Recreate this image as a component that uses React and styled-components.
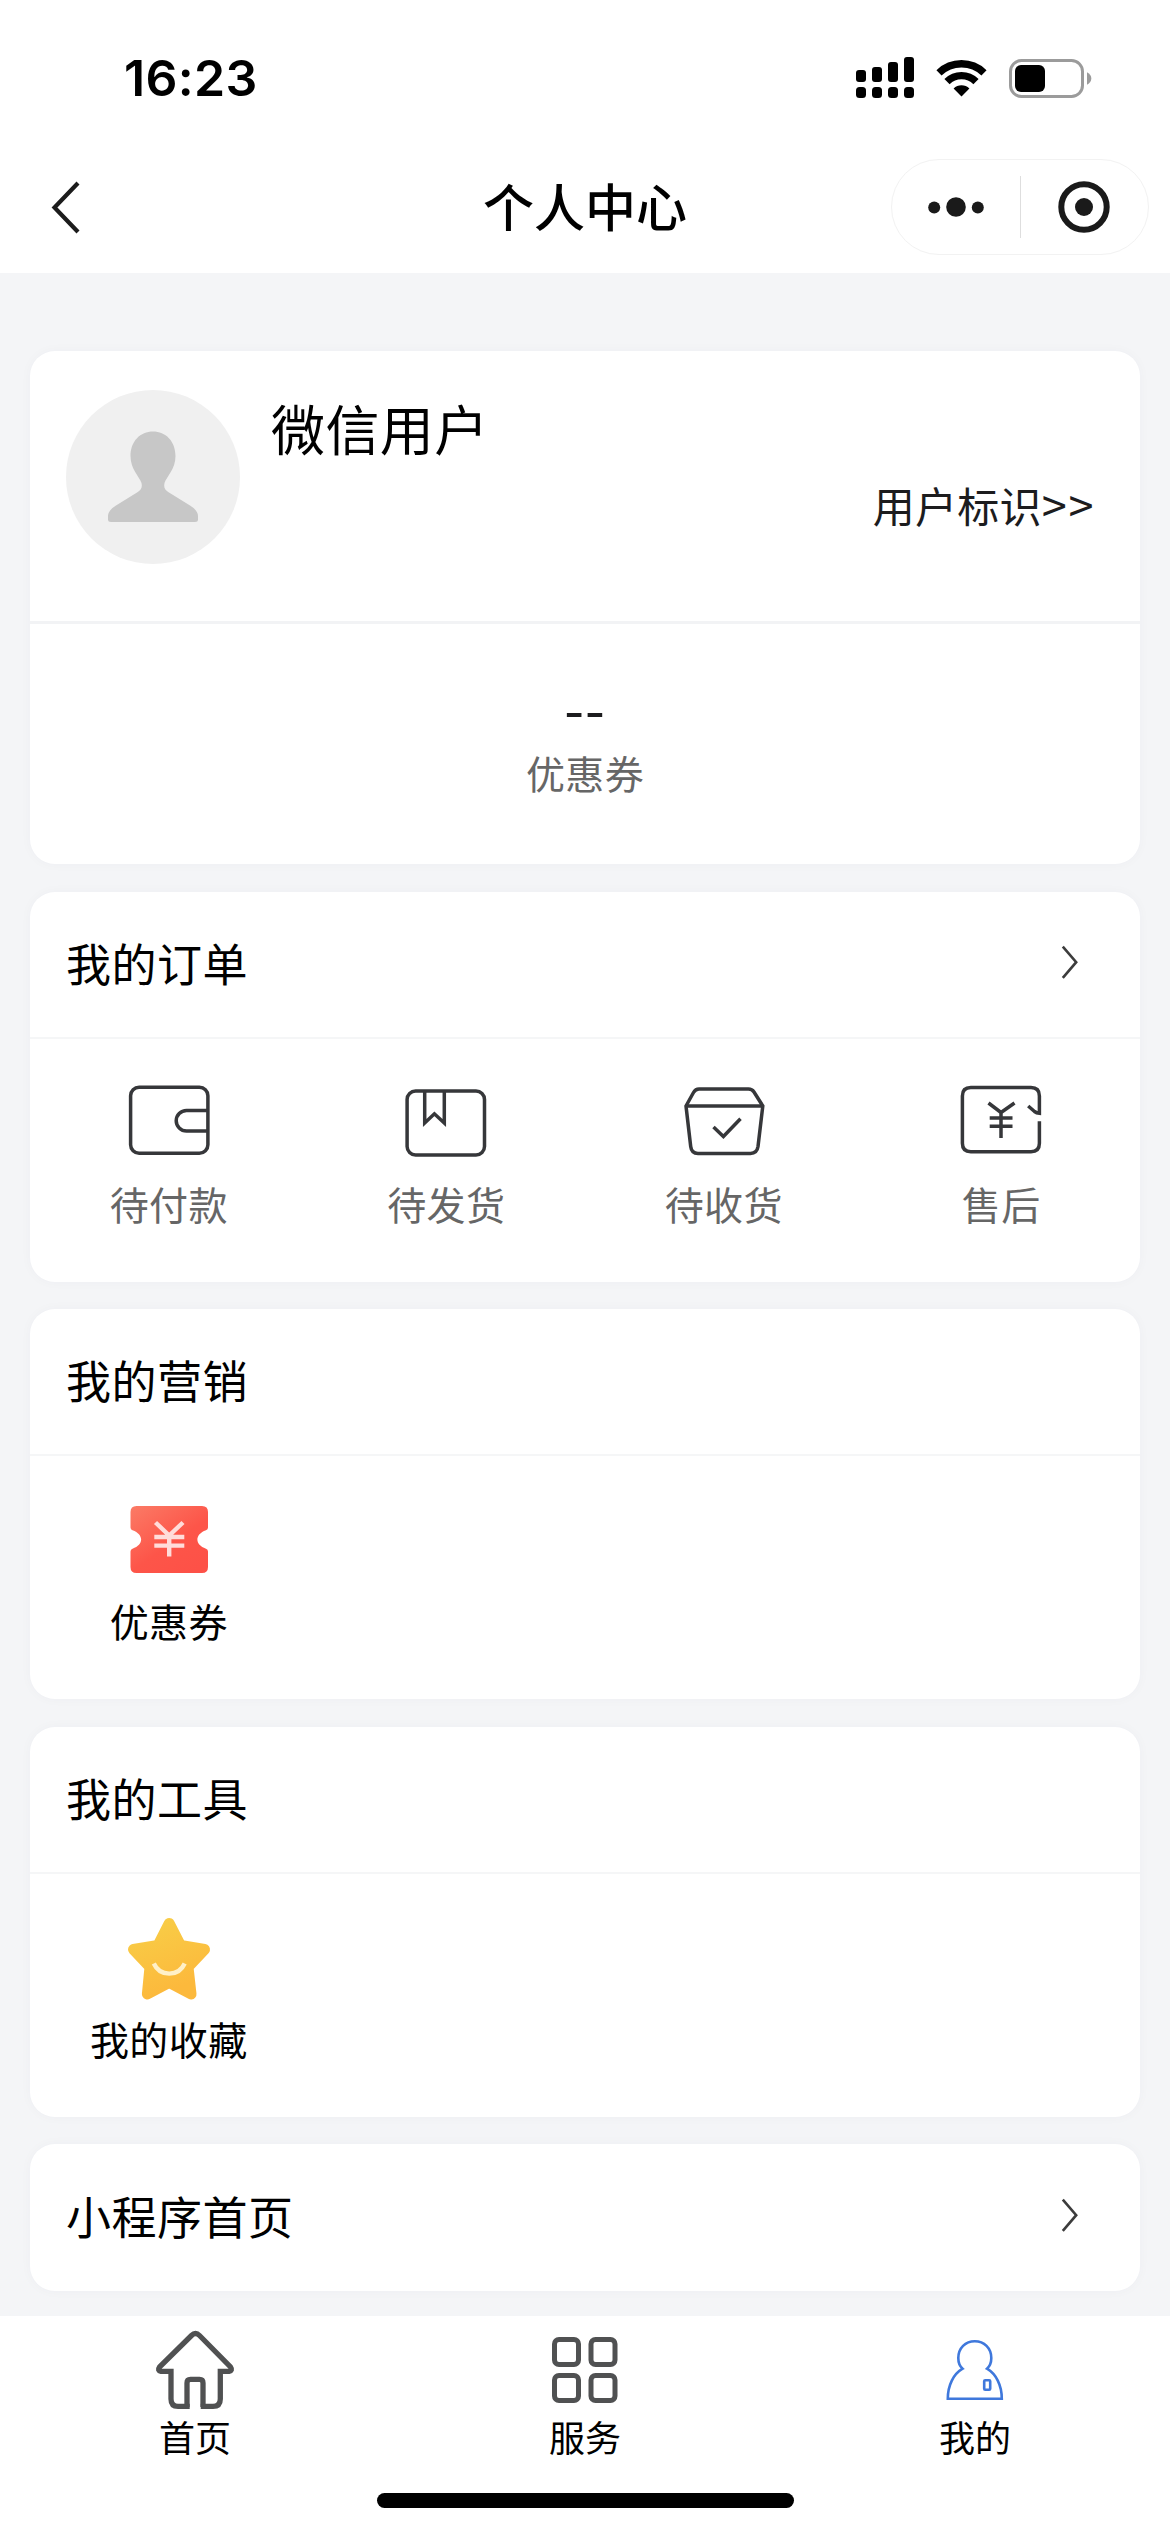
import React, { useState } from 'react';
import styled, { createGlobalStyle } from 'styled-components';

const COLORS = {
    BACKGROUND: '#f4f5f7',
    PANEL: '#ffffff',
    TEXT: '#000000',
    TEXT_DARK: '#1c1c1e',
    TEXT_GREY: '#666666',
    LINE: '#f5f6f7',
    ICON: '#36373a',
    TAB_ICON: '#505152',
    TAB_ACTIVE: '#3f78dc',
};

const GlobalStyle = createGlobalStyle`
    * {
        box-sizing: border-box;
    }

    body {
        margin: 0;
        background-color: ${COLORS.BACKGROUND};
        font-family: 'Noto Sans CJK SC', sans-serif;
        color: ${COLORS.TEXT};
    }
`;

const Page = styled.div`
    width: 1170px;
    height: 2532px;
    display: flex;
    flex-direction: column;
    overflow: hidden;
    background-color: ${COLORS.BACKGROUND};
`;

const StatusBar = styled.div`
    height: 141px;
    padding: 47px 78px 0 124px;
    display: flex;
    justify-content: space-between;
    align-items: flex-start;
    background-color: ${COLORS.PANEL};
`;

const Clock = styled.div`
    font-family: Inter, sans-serif;
    font-size: 50px;
    font-weight: 600;
    line-height: 62px;
    letter-spacing: 0.3px;
`;

const StatusIcons = styled.div`
    display: flex;
    align-items: center;
    gap: 22px;
    height: 62px;
`;

const NavBar = styled.div`
    height: 132px;
    padding: 0 21px 0 45px;
    display: grid;
    grid-template-columns: 1fr auto 1fr;
    align-items: center;
    background-color: ${COLORS.PANEL};
`;

const BackButton = styled.div`
    display: flex;
    cursor: pointer;
`;

const NavTitle = styled.div`
    font-size: 51px;
    font-weight: 500;
    line-height: 72px;
    margin: 0 0 5px -24px;
`;

const Capsule = styled.div`
    justify-self: end;
    width: 258px;
    height: 96px;
    border: 1.5px solid #f2f2f2;
    border-radius: 48px;
    display: flex;
    align-items: center;
`;

const CapsuleButton = styled.div`
    flex: 1;
    display: flex;
    justify-content: center;
    cursor: pointer;
`;

const CapsuleLine = styled.div`
    width: 1px;
    height: 62px;
    background-color: #dedede;
`;

const Content = styled.div`
    flex: 1;
    min-height: 0;
    padding: 78px 30px 0;
    display: flex;
    flex-direction: column;
    gap: 27.6px;
    overflow: hidden;
`;

const Card = styled.div`
    flex: none;
    background-color: ${COLORS.PANEL};
    border-radius: 25px;
    box-shadow: 0 0 12px rgba(60, 70, 90, 0.03);
`;

const Profile = styled.div`
    height: 273px;
    padding: 39px 45px 0 36px;
    display: flex;
    border-bottom: 3px solid #f2f3f5;
`;

const ProfileText = styled.div`
    flex: 1;
    margin-left: 31px;
    display: flex;
    flex-direction: column;
`;

const UserName = styled.div`
    margin-top: -2px;
    font-size: 54px;
    line-height: 80px;
    letter-spacing: 0.4px;
`;

const UserMark = styled.div`
    align-self: flex-end;
    margin-top: 6px;
    font-size: 42px;
    line-height: 62px;
    letter-spacing: 0.3px;
    color: ${COLORS.TEXT_DARK};
    cursor: pointer;
`;

const Arrows = styled.span`
    font-size: 45px;
    line-height: 1;
    letter-spacing: 1.6px;
`;

const Coupons = styled.div`
    height: 240px;
    padding-top: 51px;
    display: flex;
    flex-direction: column;
    align-items: center;
`;

const CouponCount = styled.div`
    height: 62px;
    font-size: 57px;
    line-height: 62px;
    letter-spacing: 1px;
    color: ${COLORS.TEXT_DARK};
`;

const CouponLabel = styled.div`
    margin-top: 7px;
    font-size: 39px;
    line-height: 56px;
    letter-spacing: 0.4px;
    color: ${COLORS.TEXT_GREY};
`;

const CardHead = styled.div`
    height: 147px;
    padding: 0 61px 3px 36px;
    display: flex;
    justify-content: space-between;
    align-items: center;
    border-bottom: ${(props) => (props.$line ? `2px solid ${COLORS.LINE}` : 'none')};
`;

const CardTitle = styled.div`
    font-size: 45px;
    line-height: 66px;
    letter-spacing: 0.5px;
`;

const EntryGrid = styled.div`
    height: 243px;
    padding-top: 32px;
    display: grid;
    grid-template-columns: repeat(4, 1fr);
    align-items: start;
`;

const Entry = styled.div`
    display: flex;
    flex-direction: column;
    align-items: center;
    gap: 4px;
    cursor: pointer;
`;

const EntryLabel = styled.div`
    font-size: 39px;
    line-height: 56px;
    letter-spacing: 0.4px;
    color: ${(props) => (props.$grey ? COLORS.TEXT_GREY : COLORS.TEXT)};
`;

const TabBar = styled.div`
    height: 216px;
    background-color: ${COLORS.PANEL};
    display: flex;
    flex-direction: column;
    align-items: center;
`;

const Tabs = styled.div`
    width: 100%;
    height: 177px;
    padding-top: 14px;
    display: flex;
`;

const Tab = styled.div`
    flex: 1;
    display: flex;
    flex-direction: column;
    align-items: center;
    color: ${(props) => (props.$active ? COLORS.TAB_ACTIVE : COLORS.TAB_ICON)};
    cursor: pointer;
`;

const TabLabel = styled.div`
    font-size: 36px;
    line-height: 52px;
    color: ${COLORS.TEXT};
`;

const HomeIndicator = styled.div`
    width: 417px;
    height: 15px;
    border-radius: 8px;
    background-color: #000000;
`;

const SignalIcon = () => (
    <svg width="58" height="42" viewBox="0 0 58 42">
        <rect x="0" y="13" width="10" height="12" rx="3" />
        <rect x="16" y="10" width="10" height="15" rx="3" />
        <rect x="32" y="5" width="10" height="20" rx="3" />
        <rect x="48" y="0" width="10" height="25" rx="3" />
        {[0, 16, 32, 48].map((x) => (
            <rect key={x} x={x} y="30" width="10" height="11" rx="3.5" />
        ))}
    </svg>
);

const WifiIcon = () => (
    <svg width="51" height="38" viewBox="0 0 51 38">
        <g fill="none" stroke="#000000" strokeWidth="7.4">
            <path d="M3 13.8A32.5 32.5 0 0 1 48 13.8" />
            <path d="M11 22.6A20.6 20.6 0 0 1 40 22.6" />
        </g>
        <path d="M25.5 37.5L17.6 29.4A11.5 11.5 0 0 1 33.4 29.4Z" />
    </svg>
);

const BatteryIcon = () => (
    <svg width="83" height="39" viewBox="0 0 83 39">
        <rect x="1.5" y="1.5" width="72" height="36" rx="11" fill="none" stroke="#9b9b9b" strokeWidth="3" />
        <rect x="6" y="6" width="30" height="27" rx="6" />
        <path d="M78 13.3Q82.3 15.5 82.3 19.5T78 25.7Z" fill="#9b9b9b" />
    </svg>
);

const BackIcon = () => (
    <svg width="42" height="56" viewBox="0 0 42 56" fill="none" stroke="#1c1c1c" strokeWidth="4.2">
        <path d="M33 4L9.5 28.5L33 53" />
    </svg>
);

const DotsIcon = () => (
    <svg width="56" height="20" viewBox="0 0 56 20" fill="#1a1a1a">
        <circle cx="6.2" cy="10.5" r="6" />
        <circle cx="28" cy="10" r="9.8" />
        <circle cx="49.8" cy="10.5" r="6" />
    </svg>
);

const TargetIcon = () => (
    <svg width="52" height="52" viewBox="0 0 52 52">
        <circle cx="26" cy="26" r="22.7" fill="none" stroke="#1a1a1a" strokeWidth="6" />
        <circle cx="26" cy="26" r="9" fill="#1a1a1a" />
    </svg>
);

const ArrowIcon = () => (
    <svg width="20" height="36" viewBox="0 0 20 36" fill="none" stroke="#3c3c3c" strokeWidth="2.6">
        <path d="M3.8 1.6L17.2 17.2L3.8 32.8" />
    </svg>
);

const AvatarIcon = () => (
    <svg width="174" height="174" viewBox="0 0 174 174">
        <circle cx="87" cy="87" r="87" fill="#f0f0f0" />
        <path
            d="M87 41.5C99.5 41.5 109.5 51 109.5 66C109.5 79 101 86 98.5 93C97.5 98 99 100 103 102.5L124 115.5Q132 120.5 132 126V129.5Q132 132 129 132H45Q42 132 42 129.5V126Q42 120.5 50 115.5L71 102.5C75 100 76.5 98 75.5 93C73 86 64.5 79 64.5 66C64.5 51 74.5 41.5 87 41.5Z"
            fill="#c7c7c7"
        />
    </svg>
);

const LineIcon = ({ children }) => (
    <svg
        width="100"
        height="100"
        viewBox="0 0 100 100"
        fill="none"
        stroke={COLORS.ICON}
        strokeWidth="3.5"
    >
        {children}
    </svg>
);

const WalletIcon = () => (
    <LineIcon>
        <rect x="11.6" y="16.3" width="77.3" height="66" rx="8.5" />
        <path d="M88.9 39.4H67.5A10.3 10.3 0 0 0 67.5 60H88.9" />
    </LineIcon>
);

const ParcelIcon = () => (
    <LineIcon>
        <rect x="11.1" y="20" width="77.4" height="64" rx="8.5" />
        <path d="M28.7 20V52L38.4 42.8L48.3 52V20" />
    </LineIcon>
);

const BasketIcon = () => (
    <LineIcon>
        <path d="M12 35L19.5 21.5Q21.5 18 25 18H74.5Q78 18 80 21L88.8 35L84 75.5Q83 82.4 76.5 82.4H24Q17.5 82.4 16.7 75.5Z" />
        <path d="M12 35H89" />
        <path d="M39.5 56L49.4 65.5L66.5 47.7" />
    </LineIcon>
);

const RefundIcon = () => (
    <LineIcon>
        <path d="M77.2 35L83.5 40.5Q85.5 42 88.4 42.3V25Q88.4 16.6 80 16.6H19.8Q11.4 16.6 11.4 25V72.3Q11.4 80.7 19.8 80.7H80Q88.4 80.7 88.4 72.3V50.3" />
        <path d="M37.5 32L50 41.5L63.5 32M50 41.5V67M38.7 47H61.5M38.7 55.3H61.5" />
    </LineIcon>
);

const CouponIcon = () => (
    <svg width="100" height="100" viewBox="0 0 100 100">
        <defs>
            <linearGradient id="coupon" x1="0" y1="0" x2="0.8" y2="1">
                <stop offset="0" stopColor="#fb7b66" />
                <stop offset="0.6" stopColor="#fd5549" />
                <stop offset="1" stopColor="#fd5147" />
            </linearGradient>
        </defs>
        <path
            d="M17.5 18H83Q89 18 89 24V39.5Q89 41.5 87 42.2C75.5 46.5 75.5 56.5 87 60.7Q89 61.5 89 63.5V79Q89 85 83 85H17.5Q11.5 85 11.5 79V63.5Q11.5 61.5 13.5 60.7C25 56.5 25 46.5 13.5 42.2Q11.5 41.5 11.5 39.5V24Q11.5 18 17.5 18Z"
            fill="url(#coupon)"
        />
        <path
            d="M36.5 34.5L50.2 47.5L64 34.5M50.2 47.5V68.5M35.3 49H65.3M35.3 57.6H65.3"
            fill="none"
            stroke="#ffdcda"
            strokeWidth="4.4"
        />
    </svg>
);

const StarIcon = () => (
    <svg width="100" height="100" viewBox="0 0 100 100">
        <defs>
            <linearGradient id="star" x1="0" y1="0" x2="0.4" y2="1">
                <stop offset="0" stopColor="#f8ce47" />
                <stop offset="1" stopColor="#fcb93c" />
            </linearGradient>
        </defs>
        <path
            d="M50.2 17.5L61.5 39.5L85.5 43.5L69 61L72 88L50.2 76.5L28.4 88L31 61L14.5 43.5L39 39.5Z"
            fill="url(#star)"
            stroke="url(#star)"
            strokeWidth="11"
            strokeLinejoin="round"
        />
        <path d="M34.8 57.5C41 71 59.5 71 65.7 57.5" fill="none" stroke="#fff0c8" strokeWidth="4.4" />
    </svg>
);

const HomeIcon = () => (
    <svg width="80" height="80" viewBox="0 0 80 80" fill="none" stroke="currentColor" strokeWidth="5.3">
        <path d="M34.7 76.4H23Q16 76.4 16 69V41.3H6Q2 40.5 4.5 37L36.5 5.5Q40.5 1.5 44.5 5.5L75.5 37Q78 40.5 74 41.3H65.3V69Q65.3 76.4 58 76.4H45.7" />
        <path d="M32 77V53Q32 49.3 35.5 49.3H44.5Q48 49.3 48 53V77" />
    </svg>
);

const ServiceIcon = () => (
    <svg width="80" height="80" viewBox="0 0 80 80" fill="none" stroke="currentColor" strokeWidth="5">
        <rect x="9.5" y="9.5" width="24" height="25" rx="4.5" />
        <rect x="46" y="9.5" width="24" height="25" rx="4.5" />
        <rect x="9.5" y="45.5" width="24" height="25" rx="4.5" />
        <rect x="46" y="45.5" width="24" height="25" rx="4.5" />
    </svg>
);

const MineIcon = () => (
    <svg width="80" height="80" viewBox="0 0 80 80" fill="none" stroke="currentColor" strokeWidth="2.6">
        <path d="M27.6 38.7C24.5 36 23.3 32 23.3 28C23.3 18 30.5 11.2 39.8 11.2S56.3 18 56.3 28C56.3 32 55 36 52 38.7C61 44 66.8 55 66.8 68.8H12.8C12.8 55 18.6 44 27.6 38.7Z" />
        <rect x="49.2" y="50.3" width="6" height="9.4" rx="1" />
    </svg>
);

const orderEntries = [
    { label: '待付款', Icon: WalletIcon },
    { label: '待发货', Icon: ParcelIcon },
    { label: '待收货', Icon: BasketIcon },
    { label: '售后', Icon: RefundIcon },
];

const sections = [
    { title: '我的订单', arrow: true, grey: true, entries: orderEntries },
    { title: '我的营销', entries: [{ label: '优惠券', Icon: CouponIcon }] },
    { title: '我的工具', entries: [{ label: '我的收藏', Icon: StarIcon }] },
    { title: '小程序首页', arrow: true },
];

const tabs = [
    { label: '首页', Icon: HomeIcon },
    { label: '服务', Icon: ServiceIcon },
    { label: '我的', Icon: MineIcon },
];

const Section = ({ title, arrow, grey, entries }) => (
    <Card>
        <CardHead $line={Boolean(entries)}>
            <CardTitle>{title}</CardTitle>
            {arrow && <ArrowIcon />}
        </CardHead>
        {entries && (
            <EntryGrid>
                {entries.map(({ label, Icon }) => (
                    <Entry key={label}>
                        <Icon />
                        <EntryLabel $grey={grey}>{label}</EntryLabel>
                    </Entry>
                ))}
            </EntryGrid>
        )}
    </Card>
);

const App = () => {
    const [activeTab, setActiveTab] = useState('我的');

    return (
        <>
            <GlobalStyle />
            <Page>
                <StatusBar>
                    <Clock>16:23</Clock>
                    <StatusIcons>
                        <SignalIcon />
                        <WifiIcon />
                        <BatteryIcon />
                    </StatusIcons>
                </StatusBar>
                <NavBar>
                    <BackButton>
                        <BackIcon />
                    </BackButton>
                    <NavTitle>个人中心</NavTitle>
                    <Capsule>
                        <CapsuleButton>
                            <DotsIcon />
                        </CapsuleButton>
                        <CapsuleLine />
                        <CapsuleButton>
                            <TargetIcon />
                        </CapsuleButton>
                    </Capsule>
                </NavBar>
                <Content>
                    <Card>
                        <Profile>
                            <AvatarIcon />
                            <ProfileText>
                                <UserName>微信用户</UserName>
                                <UserMark>
                                    用户标识<Arrows>&gt;&gt;</Arrows>
                                </UserMark>
                            </ProfileText>
                        </Profile>
                        <Coupons>
                            <CouponCount>--</CouponCount>
                            <CouponLabel>优惠券</CouponLabel>
                        </Coupons>
                    </Card>
                    {sections.map((section) => (
                        <Section key={section.title} {...section} />
                    ))}
                </Content>
                <TabBar>
                    <Tabs>
                        {tabs.map(({ label, Icon }) => (
                            <Tab key={label} $active={label === activeTab} onClick={() => setActiveTab(label)}>
                                <Icon />
                                <TabLabel>{label}</TabLabel>
                            </Tab>
                        ))}
                    </Tabs>
                    <HomeIndicator />
                </TabBar>
            </Page>
        </>
    );
};

export default App;
